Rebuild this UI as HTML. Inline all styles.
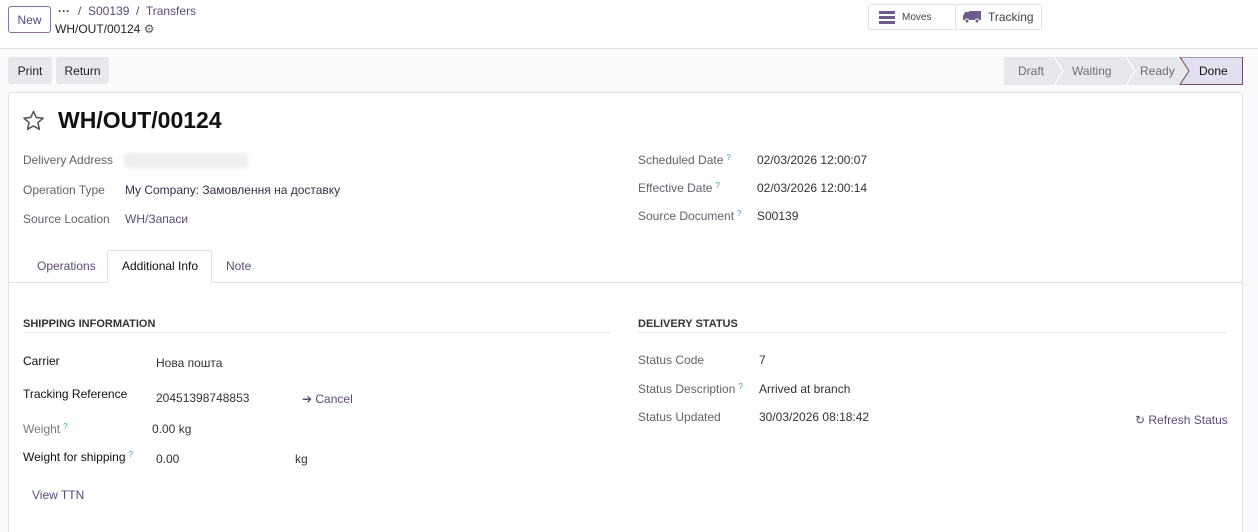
<!DOCTYPE html>
<html><head><meta charset="utf-8"><style>
*{box-sizing:border-box;margin:0;padding:0}
html,body{width:1258px;height:532px;overflow:hidden}
body{background:#f9fafb;font-family:"Liberation Sans","Noto Sans CJK SC",sans-serif;font-size:12px;color:#374151;position:relative}
.a{position:absolute;white-space:nowrap}
.top{position:absolute;left:0;top:0;width:1258px;height:49px;background:#fff;border-bottom:1px solid #dee2e6}
.btn{position:absolute;border-radius:3px;display:flex;align-items:center;justify-content:center;font-size:12px}
.lbl{color:#5f636b}
.q{color:#3a9ec5;font-size:8px;vertical-align:top;margin-left:3px}
.lnk{color:#5b4a78}
</style></head><body>
<div class="top"></div>
<div class="btn" style="left:8px;top:6px;width:43px;height:27px;border:1px solid #8a6fa0;color:#5b4a78;background:#fff">New</div>
<div class="a" style="left:58px;top:4px;font-weight:bold;color:#374151">···</div>
<div class="a" style="left:78px;top:4px;color:#5b4a78">/&nbsp; S00139 &nbsp;/&nbsp; Transfers</div>
<div class="a" style="left:55px;top:22px;color:#222">WH/OUT/00124 <span style="color:#555;font-size:12px">⚙</span></div>

<div class="btn" style="left:868px;top:4px;width:88px;height:26px;border:1px solid #dee2e6;background:#fff;justify-content:flex-start;padding-left:10px;font-size:10px;color:#444">
<svg width="16" height="13" viewBox="0 0 16 13" style="margin-right:7px"><rect y="0" width="16" height="3" fill="#6f5b8c"/><rect y="5" width="16" height="3" fill="#6f5b8c"/><rect y="10" width="16" height="3" fill="#6f5b8c"/></svg>Moves</div>
<div class="btn" style="left:955px;top:4px;width:87px;height:26px;border:1px solid #dee2e6;background:#fff;justify-content:flex-start;padding-left:7px;color:#444">
<svg width="18" height="14" viewBox="0 0 18 14" style="margin-right:7px"><path d="M6 1h12v9H6z M0 6l2-4h4v8H0z" fill="#6f5b8c"/><circle cx="4" cy="11" r="2" fill="#6f5b8c" stroke="#fff"/><circle cx="14" cy="11" r="2" fill="#6f5b8c" stroke="#fff"/></svg>Tracking</div>

<div class="btn" style="left:8px;top:57px;width:44px;height:27px;background:#e6e8ec;color:#222">Print</div>
<div class="btn" style="left:56px;top:57px;width:53px;height:27px;background:#e6e8ec;color:#222">Return</div>

<svg class="a" style="left:1004px;top:57px" width="239" height="28" viewBox="0 0 239 28">
<rect x="0" y="0" width="239" height="28" fill="#e6e8ec"/>
<path d="M176 0 H238.5 V27.5 H176 L185 14 Z" fill="#e2dfee" stroke="#714b67" stroke-width="1"/>
<path d="M50 0 L59 14 L50 28 M122 0 L131 14 L122 28" fill="none" stroke="#fff" stroke-width="1.2"/>
<text x="14" y="18" font-family="Liberation Sans" font-size="12" fill="#6b6f76">Draft</text>
<text x="68" y="18" font-family="Liberation Sans" font-size="12" fill="#6b6f76">Waiting</text>
<text x="136" y="18" font-family="Liberation Sans" font-size="12" fill="#6b6f76">Ready</text>
<text x="195" y="18" font-family="Liberation Sans" font-size="12" fill="#111">Done</text>
</svg>

<div class="a" style="left:8px;top:92px;width:1235px;height:440px;background:#fff;border:1px solid #dee2e6;border-bottom:none;border-radius:3px 3px 0 0"></div>
<svg class="a" style="left:22px;top:109px" width="23" height="23" viewBox="0 0 24 24"><path d="M12 2.5l2.9 6.4 7 .7-5.3 4.7 1.6 6.9L12 17.6l-6.2 3.6 1.6-6.9-5.3-4.7 7-.7z" fill="none" stroke="#555" stroke-width="1.6" stroke-linejoin="round"/></svg>
<div class="a" style="left:58px;top:107px;font-size:23px;font-weight:bold;color:#111">WH/OUT/00124</div>

<div class="a lbl" style="left:23px;top:153px">Delivery Address</div>
<div class="a" style="left:124px;top:153px;width:124px;height:15px;background:#eceef0;filter:blur(2px);border-radius:4px"></div>
<div class="a lbl" style="left:23px;top:183px">Operation Type</div>
<div class="a" style="left:125px;top:183px;color:#3a2e48">My Company: Замовлення на доставку</div>
<div class="a lbl" style="left:23px;top:212px">Source Location</div>
<div class="a lnk" style="left:125px;top:212px">WH/Запаси</div>

<div class="a lbl" style="left:638px;top:153px">Scheduled Date<span class="q">?</span></div>
<div class="a" style="left:757px;top:153px;color:#333">02/03/2026 12:00:07</div>
<div class="a lbl" style="left:638px;top:181px">Effective Date<span class="q">?</span></div>
<div class="a" style="left:757px;top:181px;color:#333">02/03/2026 12:00:14</div>
<div class="a lbl" style="left:638px;top:209px">Source Document<span class="q">?</span></div>
<div class="a" style="left:757px;top:209px;color:#333">S00139</div>

<div class="a" style="left:9px;top:282px;width:1233px;height:1px;background:#dee2e6"></div>
<div class="a" style="left:107px;top:250px;width:105px;height:33px;background:#fff;border:1px solid #dee2e6;border-bottom:none;border-radius:3px 3px 0 0"></div>
<div class="a" style="left:37px;top:259px;color:#5b4a78">Operations</div>
<div class="a" style="left:122px;top:259px;color:#111">Additional Info</div>
<div class="a" style="left:226px;top:259px;color:#5b4a78">Note</div>

<div class="a" style="left:23px;top:318px;font-size:11px;font-weight:bold;color:#333">SHIPPING INFORMATION</div>
<div class="a" style="left:23px;top:332px;width:588px;height:1px;background:#e3e5e8"></div>
<div class="a" style="left:638px;top:318px;font-size:11px;font-weight:bold;color:#333">DELIVERY STATUS</div>
<div class="a" style="left:638px;top:332px;width:589px;height:1px;background:#e3e5e8"></div>

<div class="a" style="left:23px;top:354px;color:#111">Carrier</div>
<div class="a" style="left:156px;top:356px;color:#333">Нова пошта</div>
<div class="a" style="left:23px;top:387px;color:#111">Tracking Reference</div>
<div class="a" style="left:156px;top:391px;color:#333">20451398748853</div>
<div class="a lnk" style="left:302px;top:392px">➔ Cancel</div>
<div class="a lbl" style="left:23px;top:422px;color:#777">Weight<span class="q">?</span></div>
<div class="a" style="left:152px;top:422px;color:#333">0.00 kg</div>
<div class="a" style="left:23px;top:450px;color:#111">Weight for shipping<span class="q">?</span></div>
<div class="a" style="left:156px;top:452px;color:#333">0.00</div>
<div class="a" style="left:295px;top:452px;color:#333">kg</div>
<div class="a lnk" style="left:32px;top:488px">View TTN</div>

<div class="a lbl" style="left:638px;top:353px">Status Code</div>
<div class="a" style="left:759px;top:353px;color:#333">7</div>
<div class="a lbl" style="left:638px;top:382px">Status Description<span class="q">?</span></div>
<div class="a" style="left:759px;top:382px;color:#333">Arrived at branch</div>
<div class="a lbl" style="left:638px;top:410px">Status Updated</div>
<div class="a" style="left:759px;top:410px;color:#333">30/03/2026 08:18:42</div>
<div class="a lnk" style="left:1135px;top:413px">↻ Refresh Status</div>
</body></html>
